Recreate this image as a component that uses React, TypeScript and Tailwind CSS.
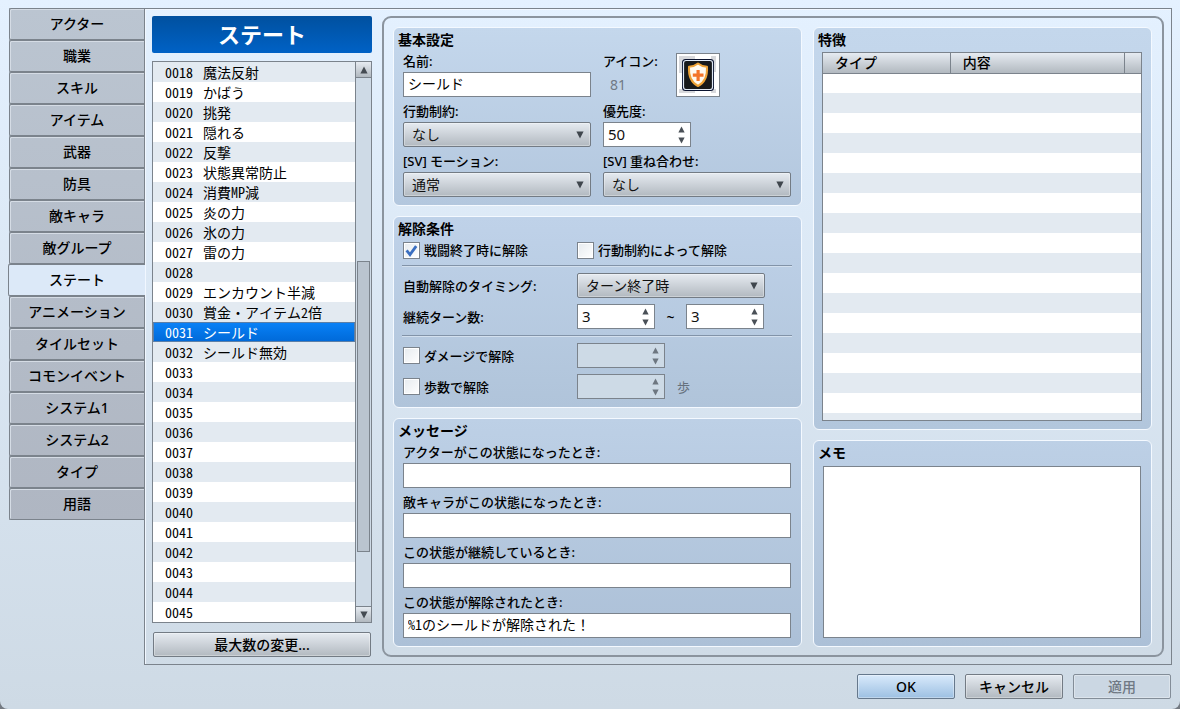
import React, { useState } from "react";

const tabs = [
  "アクター", "職業", "スキル", "アイテム", "武器", "防具", "敵キャラ", "敵グループ",
  "ステート", "アニメーション", "タイルセット", "コモンイベント", "システム1", "システム2", "タイプ", "用語",
];

const stateNames: Record<number, string> = {
  18: "魔法反射", 19: "かばう", 20: "挑発", 21: "隠れる", 22: "反撃", 23: "状態異常防止",
  24: "消費MP減", 25: "炎の力", 26: "氷の力", 27: "雷の力", 29: "エンカウント半減",
  30: "賞金・アイテム2倍", 31: "シールド", 32: "シールド無効",
};
const states = Array.from({ length: 28 }, (_, i) => i + 18);

const mono = "font-['Noto_Sans_Mono_CJK_JP','Noto_Sans_CJK_JP',monospace]";
const metal = "bg-linear-to-b from-[#e6ebf1] to-[#b2b9c0]";
const field = "block h-[25px] border border-[#7b838c] bg-white pb-[3px] text-black outline-none";

function Triangle({ up = false, className = "" }: { up?: boolean; className?: string }) {
  return (
    <svg viewBox="0 0 8 8" aria-hidden="true" className={`block ${className}`}>
      <path d={up ? "M4 0.5 7.6 7.5H0.4Z" : "M0.4 0.5H7.6L4 7.5Z"} fill="currentColor" />
    </svg>
  );
}

function Group({ title, className = "", children }: { title: string; className?: string; children: React.ReactNode }) {
  return (
    <section className={`flex flex-col rounded-md border border-[#f4f9ff] pt-[2px] pb-2 ${className}`}>
      <h2 className="h-5 pl-1 text-sm leading-5 font-bold">{title}</h2>
      {children}
    </section>
  );
}

function Label({ htmlFor, children }: { htmlFor: string; children: React.ReactNode }) {
  return (
    <label htmlFor={htmlFor} className="block h-[22px] text-[13px] leading-[22px] font-medium whitespace-nowrap">
      {children}
    </label>
  );
}

function Select({ id, value, className = "" }: { id: string; value: string; className?: string }) {
  return (
    <div className={`relative h-[25px] ${className}`}>
      <select
        id={id}
        defaultValue={value}
        className={`block h-full w-full appearance-none rounded-xs border border-[#737b84] pr-6 pl-2 text-sm leading-none text-[#111] shadow-[inset_0_0_0_1px_#ffffff55] outline-none ${metal}`}
      >
        <option>{value}</option>
      </select>
      <Triangle className="pointer-events-none absolute top-[9px] right-[7px] size-2 text-[#3f464d]" />
    </div>
  );
}

function Spinner({ id, label, value, disabled = false, className = "" }: { id: string; label?: string; value?: number; disabled?: boolean; className?: string }) {
  return (
    <div className={`flex h-[25px] border border-[#7b838c] ${disabled ? "bg-[#cddae6] text-[#6d7680]" : "bg-white text-[#4a5057]"} ${className}`}>
      <input
        id={id}
        type="number"
        aria-label={label}
        defaultValue={value}
        disabled={disabled}
        className="min-w-0 flex-1 appearance-none pb-[2px] pl-1 text-[15px] leading-none text-[#111] outline-none [-moz-appearance:textfield] [&::-webkit-inner-spin-button]:appearance-none"
      />
      <div className="flex w-[17px] flex-col items-center justify-center gap-1">
        <button type="button" tabIndex={-1} disabled={disabled} aria-label="増やす"><Triangle up className="size-[7px]" /></button>
        <button type="button" tabIndex={-1} disabled={disabled} aria-label="減らす"><Triangle className="size-[7px]" /></button>
      </div>
    </div>
  );
}

function Check({ label, on = false }: { label: string; on?: boolean }) {
  const [checked, setChecked] = useState(on);
  return (
    <label className="flex items-center gap-1 text-[13px] leading-5 font-medium whitespace-nowrap">
      <span className="relative block size-[17px]">
        <input
          type="checkbox"
          checked={checked}
          onChange={(e) => setChecked(e.target.checked)}
          className="block size-full appearance-none border border-[#7b838c] bg-linear-to-br from-[#e6ebef] to-white shadow-[inset_0_0_0_1px_#fff]"
        />
        {checked && (
          <svg viewBox="0 0 17 17" aria-hidden="true" className="pointer-events-none absolute inset-0">
            <path d="M3.6 8.4 7 12.6 13.2 4.2" fill="none" stroke="#3b6fc0" strokeWidth="2.8" />
          </svg>
        )}
      </span>
      {label}
    </label>
  );
}

function ShieldIcon() {
  return (
    <svg viewBox="0 0 42 42" aria-hidden="true" className="block size-full">
      <rect width="42" height="42" fill="#fff" />
      <path d="M2 2h16v17H2zM18 19h16v16H18zM34 2h5v16h-5zM2 35h16v4H2zM34 35h5v4h-5z" fill="#d8d9dc" />
      <rect x="5" y="5" width="32" height="32" rx="3.5" fill="#0b1430" />
      <rect x="6.5" y="6.5" width="29" height="29" rx="2.5" fill="#17191b" stroke="#dfe8f5" strokeWidth="1.2" />
      <path d="M21 9.500C18.500 11.500 15.500 12.600 12 12.800C11.500 21 13 28 21 32C29 28 30.500 21 30 12.800C26.500 12.600 23.500 11.500 21 9.500Z" fill="#fffaf0" stroke="#eea338" strokeWidth="2" strokeLinejoin="round" />
      <path d="M19.500 16h3.200v3.500h3.800v3.200h-3.800v4.300h-3.200v-4.300h-3.700v-3.200h3.700z" fill="#f4752a" />
    </svg>
  );
}

function Rule() {
  return <hr className="-mx-px h-[2px] border-0 border-t border-b border-t-[#8293a8] border-b-[#d3e0ee]" />;
}

const messages = [
  ["アクターがこの状態になったとき:", ""],
  ["敵キャラがこの状態になったとき:", ""],
  ["この状態が継続しているとき:", ""],
  ["この状態が解除されたとき:", "%1のシールドが解除された！"],
];

const dialogButton = "h-[25px] w-[98px] rounded-xs border text-sm leading-none font-medium shadow-[inset_0_0_0_1px_#ffffff55]";

export default function App() {
  const [tab, setTab] = useState("ステート");
  const [selected, setSelected] = useState(31);

  return (
    <div className="min-h-screen bg-[#747a82] font-['Noto_Sans','Noto_Sans_CJK_JP',sans-serif] text-black">
      <div className="flex min-h-screen flex-col gap-[9px] rounded-b-lg bg-linear-to-b from-[#e4f1ff] to-[#cedae5] py-2 pr-2 pl-[9px]">
        <main className="flex items-stretch">
          <nav className="w-[135px] shrink-0 self-start bg-linear-to-b from-[#bbc5d1] to-[#afb6c2]">
            {tabs.map((name) => (
              <button
                key={name}
                type="button"
                aria-current={tab === name ? "page" : undefined}
                onClick={() => setTab(name)}
                className={
                  tab === name
                    ? "relative -ml-px block h-8 w-[137px] rounded-l-xs border border-r-0 border-[#7b838c] bg-[#dce9f8] text-sm leading-none font-medium"
                    : "block h-8 w-full rounded-l-xs border border-r-0 border-[#7b838c] text-sm leading-none font-medium shadow-[inset_1px_1px_0_#d5dce5]"
                }
              >
                {name}
              </button>
            ))}
          </nav>

          <div className="flex min-w-0 flex-1 items-stretch gap-[10px] border border-[#7b838c] p-[7px] shadow-[inset_1px_1px_0_#f1f7ff]">
            <div className="flex w-[220px] shrink-0 flex-col">
              <h1 className="h-[37px] rounded-xs bg-linear-to-b from-[#00509f] to-[#0062c6] text-center text-[22px] leading-[37px] font-bold text-white">ステート</h1>
              <div className="mt-2 flex h-[562px] border border-[#7b838c] bg-white">
                <ul className={`min-w-0 flex-1 text-sm ${mono}`}>
                  {states.map((n) => (
                    <li key={n}>
                      <button
                        type="button"
                        onClick={() => setSelected(n)}
                        className={`flex h-5 w-full items-center gap-[10px] pl-3 text-left leading-5 whitespace-nowrap ${
                          selected === n
                            ? "bg-linear-to-b from-[#0a82f8] to-[#0069d8] text-white shadow-[inset_0_0_0_1px_#5b7fa8]"
                            : n % 2 === 0
                              ? "bg-[#e3eaf1]"
                              : "bg-white"
                        }`}
                      >
                        <span>{String(n).padStart(4, "0")}</span>
                        <span>{stateNames[n]}</span>
                      </button>
                    </li>
                  ))}
                </ul>
                <div className="flex w-4 flex-col border-l border-[#7b838c] bg-[#cedae6]">
                  <button type="button" aria-label="上へ" className={`flex h-4 items-center justify-center border-b border-[#7b838c] text-[#454b52] ${metal}`}>
                    <Triangle up className="size-2" />
                  </button>
                  <div className="flex-1 px-px pt-[183px]">
                    <div className="h-[291px] border border-[#7b838c] bg-[#bac4cf]" />
                  </div>
                  <button type="button" aria-label="下へ" className={`flex h-4 items-center justify-center border-t border-[#7b838c] text-[#454b52] ${metal}`}>
                    <Triangle className="size-2" />
                  </button>
                </div>
              </div>
              <button type="button" className={`mx-px mt-[9px] h-[25px] rounded-xs border border-[#737b84] text-sm leading-none font-medium shadow-[inset_0_0_0_1px_#ffffff55] ${metal}`}>
                最大数の変更...
              </button>
            </div>

            <div className="flex min-w-0 flex-1 items-stretch gap-[11px] rounded-[9px] border-2 border-[#8b949e] pt-[9px] pr-[10px] pb-2 pl-[9px]">
              <div className="flex w-[409px] shrink-0 flex-col gap-[10px]">
                <Group title="基本設定" className="bg-linear-to-b from-[#c4d7ec] to-[#b3c7de]">
                  <div className="grid grid-cols-[188px_188px] gap-x-3 gap-y-[3px] pr-[10px] pl-[9px]">
                    <div>
                      <Label htmlFor="name">名前:</Label>
                      <input id="name" type="text" defaultValue="シールド" className={`${field} w-full px-1 text-sm ${mono}`} />
                    </div>
                    <div className="flex items-end">
                      <div className="h-full w-[73px]">
                        <Label htmlFor="icon">アイコン:</Label>
                        <span className="block pl-[7px] text-sm leading-[25px] text-[#707984]">81</span>
                      </div>
                      <button id="icon" type="button" className="size-11 border border-[#7b838c]"><ShieldIcon /></button>
                    </div>
                    <div>
                      <Label htmlFor="restriction">行動制約:</Label>
                      <Select id="restriction" value="なし" />
                    </div>
                    <div>
                      <Label htmlFor="priority">優先度:</Label>
                      <Spinner id="priority" value={50} className="w-[88px]" />
                    </div>
                    <div>
                      <Label htmlFor="motion">[SV] モーション:</Label>
                      <Select id="motion" value="通常" />
                    </div>
                    <div>
                      <Label htmlFor="overlay">[SV] 重ね合わせ:</Label>
                      <Select id="overlay" value="なし" />
                    </div>
                  </div>
                </Group>

                <Group title="解除条件" className="bg-linear-to-b from-[#bfd2e9] to-[#b0c4da]">
                  <div className="pr-[10px] pl-[9px]">
                    <div className="grid h-[22px] grid-cols-[174px_1fr] items-center">
                      <Check label="戦闘終了時に解除" on />
                      <Check label="行動制約によって解除" />
                    </div>
                    <div className="pt-1 pb-[6px]"><Rule /></div>
                    <div className="grid grid-cols-[174px_1fr] items-center gap-y-[6px]">
                      <Label htmlFor="timing">自動解除のタイミング:</Label>
                      <Select id="timing" value="ターン終了時" className="w-[188px]" />
                      <Label htmlFor="turns-min">継続ターン数:</Label>
                      <div className="flex items-center">
                        <Spinner id="turns-min" value={3} className="w-[78px]" />
                        <span className="w-[31px] text-center text-sm leading-5 font-medium">~</span>
                        <Spinner id="turns-max" label="継続ターン数の最大" value={3} className="w-[78px]" />
                      </div>
                    </div>
                    <div className="py-[6px]"><Rule /></div>
                    <div className="grid grid-cols-[174px_1fr] items-center gap-y-[6px]">
                      <Check label="ダメージで解除" />
                      <Spinner id="damage" label="ダメージで解除の確率" disabled className="w-[88px]" />
                      <Check label="歩数で解除" />
                      <div className="flex items-center gap-3 text-[13px] leading-5 text-[#66717d]">
                        <Spinner id="steps" label="歩数" disabled className="w-[88px]" />
                        歩
                      </div>
                    </div>
                  </div>
                </Group>

                <Group title="メッセージ" className="bg-linear-to-b from-[#bdd0e6] to-[#acc0d7]">
                  <div className="flex flex-col gap-[3px] pr-[10px] pl-[9px]">
                    {messages.map(([label, value], i) => (
                      <div key={label}>
                        <Label htmlFor={`message-${i}`}>{label}</Label>
                        <input id={`message-${i}`} type="text" defaultValue={value} className={`${field} w-full px-1 text-sm ${mono}`} />
                      </div>
                    ))}
                  </div>
                </Group>
              </div>

              <div className="flex min-w-0 flex-1 flex-col gap-[10px]">
                <Group title="特徴" className="bg-linear-to-b from-[#c4d7ec] to-[#b2c6dc]">
                  <div className="mt-[2px] mr-[9px] ml-2 h-[369px] overflow-hidden border border-[#7b838c] bg-white">
                    <table className="w-full table-fixed border-collapse text-sm leading-[19px]">
                      <thead>
                        <tr className={`h-5 ${metal}`}>
                          <th className="w-[40%] border-r border-b border-[#7b838c] p-0 pl-3 text-left font-medium">タイプ</th>
                          <th className="border-r border-b border-[#7b838c] p-0 pl-3 text-left font-medium">内容</th>
                          <th className="w-[17px] border-b border-[#7b838c] p-0" />
                        </tr>
                      </thead>
                      <tbody>
                        {Array.from({ length: 18 }, (_, i) => (
                          <tr key={i} className="h-5 odd:bg-white even:bg-[#e3eaf1]">
                            <td className="p-0" /><td className="p-0" /><td className="p-0" />
                          </tr>
                        ))}
                      </tbody>
                    </table>
                  </div>
                </Group>

                <Group title="メモ" className="flex-1 bg-linear-to-b from-[#bdd0e6] to-[#acc0d7]">
                  <textarea aria-label="メモ" className={`mt-[3px] mr-[10px] ml-[9px] block min-h-32 flex-1 resize-none border border-[#7b838c] bg-white p-1 text-sm outline-none ${mono}`} />
                </Group>
              </div>
            </div>
          </div>
        </main>

        <footer className="flex justify-end gap-[10px] pr-px">
          <button type="button" className={`${dialogButton} border-[#66788c] bg-linear-to-b from-[#d9eafb] to-[#9dc0e2]`}>OK</button>
          <button type="button" className={`${dialogButton} border-[#737b84] ${metal}`}>キャンセル</button>
          <button type="button" disabled className={`${dialogButton} border-[#838d98] bg-[#cbd7e3] text-[#707984]`}>適用</button>
        </footer>
      </div>
    </div>
  );
}
